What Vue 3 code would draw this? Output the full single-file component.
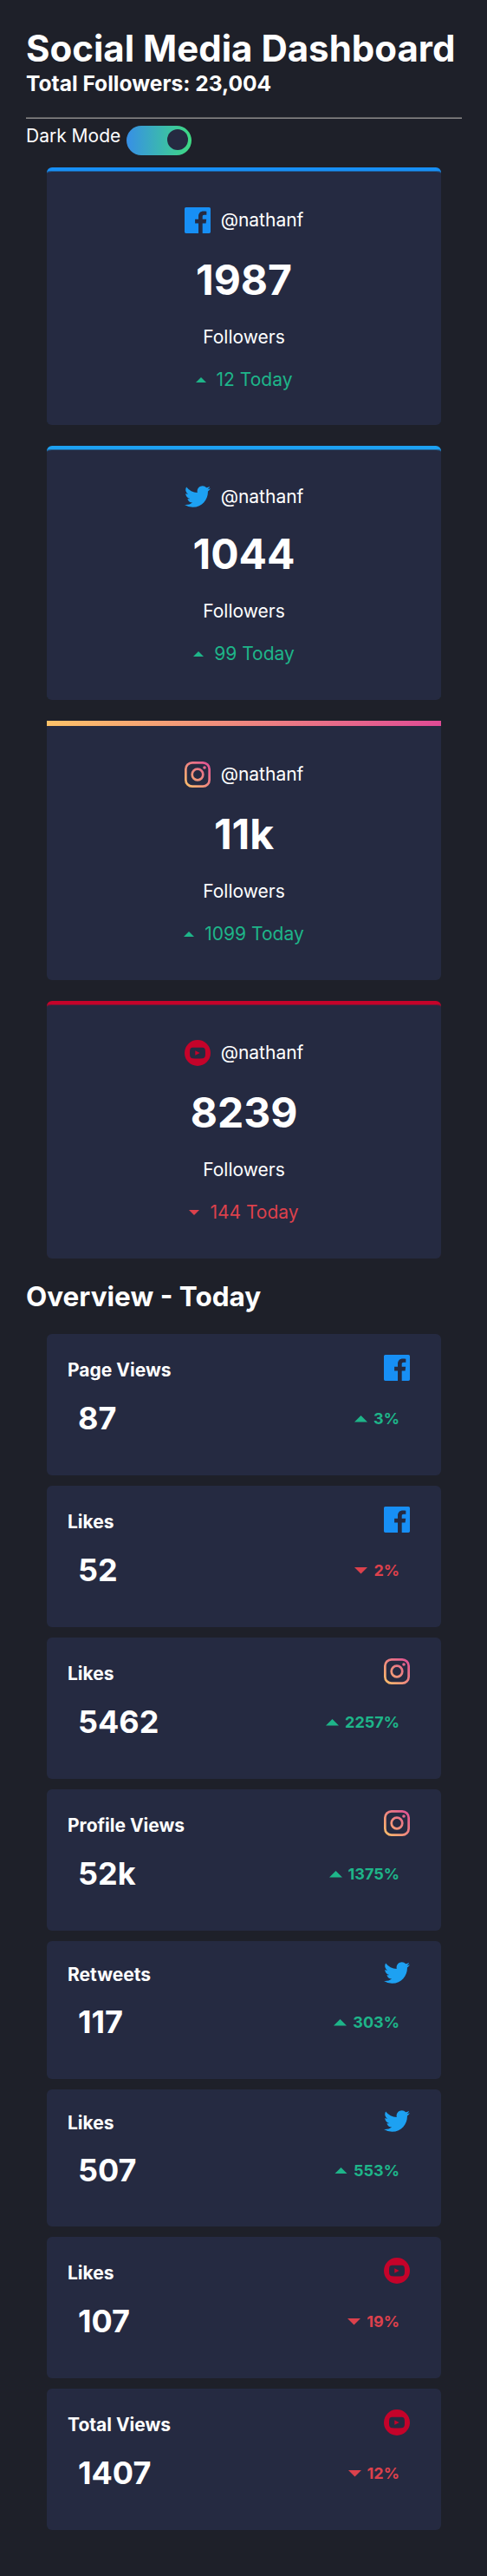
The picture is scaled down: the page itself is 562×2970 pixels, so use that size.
<script setup>
import { ref } from 'vue'

const dark = ref(true)

const accounts = [
  { site: 'facebook', count: '1987', change: '12 Today', up: true },
  { site: 'twitter', count: '1044', change: '99 Today', up: true },
  { site: 'instagram', count: '11k', change: '1099 Today', up: true },
  { site: 'youtube', count: '8239', change: '144 Today', up: false },
]

const stats = [
  { site: 'facebook', label: 'Page Views', value: '87', change: '3%', up: true },
  { site: 'facebook', label: 'Likes', value: '52', change: '2%', up: false },
  { site: 'instagram', label: 'Likes', value: '5462', change: '2257%', up: true },
  { site: 'instagram', label: 'Profile Views', value: '52k', change: '1375%', up: true },
  { site: 'twitter', label: 'Retweets', value: '117', change: '303%', up: true },
  { site: 'twitter', label: 'Likes', value: '507', change: '553%', up: true },
  { site: 'youtube', label: 'Likes', value: '107', change: '19%', up: false },
  { site: 'youtube', label: 'Total Views', value: '1407', change: '12%', up: false },
]
</script>

<template>
  <svg class="defs" width="0" height="0" aria-hidden="true">
    <defs>
      <linearGradient id="insta" gradientUnits="userSpaceOnUse" x1="0" y1="20" x2="20" y2="0">
        <stop offset="0" stop-color="#FDC468" />
        <stop offset="1" stop-color="#DF4996" />
      </linearGradient>
      <symbol id="facebook" viewBox="0 0 20 20">
        <path fill="#178FF5" d="M18.896 0H1.104C.494 0 0 .494 0 1.104v17.793C0 19.506.494 20 1.104 20h9.58v-7.745H8.076V9.237h2.606V7.01c0-2.583 1.578-3.99 3.883-3.99 1.104 0 2.052.082 2.329.119v2.7h-1.598c-1.254 0-1.496.597-1.496 1.47v1.928h2.989l-.39 3.018h-2.6V20h5.098c.608 0 1.102-.494 1.102-1.104V1.104C20 .494 19.506 0 18.896 0z" />
      </symbol>
      <symbol id="twitter" viewBox="0 0 20 17">
        <path fill="#1DA1F2" d="M20 2.172a8.192 8.192 0 01-2.357.646 4.11 4.11 0 001.805-2.27 8.22 8.22 0 01-2.606.996A4.096 4.096 0 0013.847.248c-2.65 0-4.596 2.472-3.998 5.037A11.648 11.648 0 011.392.998 4.109 4.109 0 002.662 6.477 4.086 4.086 0 01.8 5.963c-.045 1.901 1.318 3.68 3.291 4.075a4.113 4.113 0 01-1.853.07 4.106 4.106 0 003.833 2.849A8.25 8.25 0 010 14.658a11.616 11.616 0 006.29 1.843c7.618 0 11.922-6.434 11.662-12.205A8.354 8.354 0 0020 2.172z" />
      </symbol>
      <symbol id="instagram" viewBox="0 0 20 20">
        <rect x=".9" y=".9" width="18.2" height="18.2" rx="5" fill="none" stroke="url(#insta)" stroke-width="1.8" />
        <circle cx="10" cy="10" r="4.2" fill="none" stroke="url(#insta)" stroke-width="1.8" />
        <circle cx="15.34" cy="4.66" r="1.2" fill="url(#insta)" />
      </symbol>
      <symbol id="youtube" viewBox="0 0 20 20">
        <path fill="#C4032A" fill-rule="evenodd" d="M10 0a10 10 0 100 20 10 10 0 000-20zM6.2 5.9Q10 5.6 13.8 5.9Q15.7 6 15.9 8Q16.1 10 15.9 12Q15.7 14 13.8 14.1Q10 14.4 6.2 14.1Q4.3 14 4.1 12Q3.9 10 4.1 8Q4.3 6 6.2 5.9zM8.2 8.1v3.8L11.8 10z" />
      </symbol>
    </defs>
  </svg>

  <main class="page">
    <header>
      <h1>Social Media Dashboard</h1>
      <h3>Total Followers: 23,004</h3>
      <hr />
      <div class="mode">
        <span>Dark Mode</span>
        <button class="toggle" :class="{ on: dark }" aria-label="Dark Mode" @click="dark = !dark">
          <span class="knob"></span>
        </button>
      </div>
    </header>

    <section class="accounts">
      <article v-for="a in accounts" :key="a.site" class="account" :class="a.site">
        <div class="handle">
          <svg class="icon"><use :href="'#' + a.site" /></svg>
          <span>@nathanf</span>
        </div>
        <div class="count">{{ a.count }}</div>
        <div class="line">Followers</div>
        <div class="line change" :class="a.up ? 'up' : 'down'">
          <svg class="arrow" viewBox="0 0 8 4"><path :d="a.up ? 'M0 4l4-4 4 4z' : 'M0 0l4 4 4-4z'" /></svg>
          <span>{{ a.change }}</span>
        </div>
      </article>
    </section>

    <h2>Overview - Today</h2>

    <section class="stats">
      <article v-for="(s, i) in stats" :key="i" class="stat" :class="s.site">
        <div class="top">
          <span class="label">{{ s.label }}</span>
          <svg class="icon"><use :href="'#' + s.site" /></svg>
        </div>
        <div class="bottom">
          <span class="value">{{ s.value }}</span>
          <span class="percent" :class="s.up ? 'up' : 'down'">
            <svg class="arrow" viewBox="0 0 8 4"><path :d="s.up ? 'M0 4l4-4 4 4z' : 'M0 0l4 4 4-4z'" /></svg>
            <span>{{ s.change }}</span>
          </span>
        </div>
      </article>
    </section>
  </main>
</template>

<style>
body {
  background: #1e2029;
}
</style>

<style scoped>
.defs {
  position: absolute;
}
.page {
  box-sizing: border-box;
  min-height: 2970px;
  padding: 30px 29px 0 30px;
  background: #1e2029;
  color: #fff;
  font-family: Inter, "Liberation Sans", sans-serif;
  font-size: 21px;
  line-height: 26px;
}
h1, h2, h3 {
  margin: 0;
  font-weight: 700;
}
h1 {
  font-size: 42px;
  line-height: 51px;
  white-space: nowrap;
}
h3 {
  font-size: 24.57px;
  line-height: 30px;
}
hr {
  height: 0;
  margin: 24px 0 0;
  border: 0;
  border-top: 1px solid #5e5e60;
  border-bottom: 1px solid #848284;
}
.mode {
  display: flex;
  align-items: flex-start;
  gap: 7px;
  height: 56px;
  padding-top: 7px;
  box-sizing: border-box;
}
.toggle {
  display: flex;
  justify-content: flex-start;
  box-sizing: border-box;
  width: 75px;
  height: 34px;
  margin-top: 1px;
  padding: 4px;
  border: 0;
  border-radius: 17px;
  background: linear-gradient(to right, #378fe6, #3eda82);
}
.toggle.on {
  justify-content: flex-end;
}
.knob {
  width: 24px;
  height: 24px;
  border-radius: 50%;
  background: #252a41;
}
.accounts {
  display: flex;
  flex-direction: column;
  gap: 24px;
  width: 455px;
  margin-left: 24px;
}
.account {
  display: flex;
  flex-direction: column;
  align-items: center;
  box-sizing: border-box;
  height: 297px;
  padding-top: 42px;
  border-top: 4px solid #178ff5;
  border-radius: 6px;
  background: #252a41;
  box-shadow: inset 0 1px #1e5d9b;
}
.account.twitter {
  height: 293px;
  border-top-color: #1da1f2;
  box-shadow: inset 0 1px #21669a;
}
.account.instagram {
  height: 299px;
  padding-top: 41px;
  border-top: 6px solid;
  border-image: linear-gradient(to right, #fdc468, #df4996) 6;
  border-radius: 0 0 6px 6px;
  box-shadow: none;
}
.account.youtube {
  padding-top: 41px;
  border-top-color: #c4032a;
  box-shadow: inset 0 1px #751736;
}
.icon {
  display: block;
  width: 30px;
  height: 30px;
}
.twitter .icon {
  height: 25.5px;
}
.handle {
  display: flex;
  align-items: center;
  gap: 12px;
}
.count {
  margin-top: 25px;
  font-size: 48px;
  font-weight: 700;
  line-height: 58px;
}
.twitter .count {
  margin-top: 24px;
}
.line {
  margin-top: 24px;
}
.change {
  display: flex;
  align-items: center;
  gap: 12px;
  margin-top: 23px;
}
.change .arrow {
  width: 12px;
  height: 6px;
  margin-bottom: 1px;
}
.up {
  color: #1eb589;
}
.down {
  color: #dc414c;
}
.arrow {
  display: block;
  fill: currentColor;
}
h2 {
  margin-top: 24px;
  font-size: 31.5px;
  line-height: 39px;
}
.stats {
  display: flex;
  flex-direction: column;
  gap: 12px;
  width: 455px;
  margin: 24px 0 0 24px;
}
.stat {
  box-sizing: border-box;
  height: 163px;
  padding: 24px 36px 0 24px;
  border-radius: 6px;
  background: #252a41;
}
.stat.twitter {
  height: 158.5px;
}
.top {
  display: flex;
  align-items: flex-start;
  justify-content: space-between;
  height: 30px;
}
.twitter .top {
  height: 26px;
}
.label {
  margin-top: 5px;
  font-size: 21px;
  font-weight: 700;
}
.twitter .label {
  margin-top: 2px;
}
.bottom {
  display: flex;
  align-items: center;
  justify-content: space-between;
  height: 44px;
  margin-top: 21px;
  padding: 0 12px;
}
.value {
  font-size: 36px;
  font-weight: 700;
  line-height: 44px;
}
.percent {
  display: flex;
  align-items: center;
  gap: 7px;
  margin-top: 2px;
  font-size: 18px;
  font-weight: 700;
  line-height: 22px;
}
.percent .arrow {
  width: 15px;
  height: 7.5px;
}
</style>
